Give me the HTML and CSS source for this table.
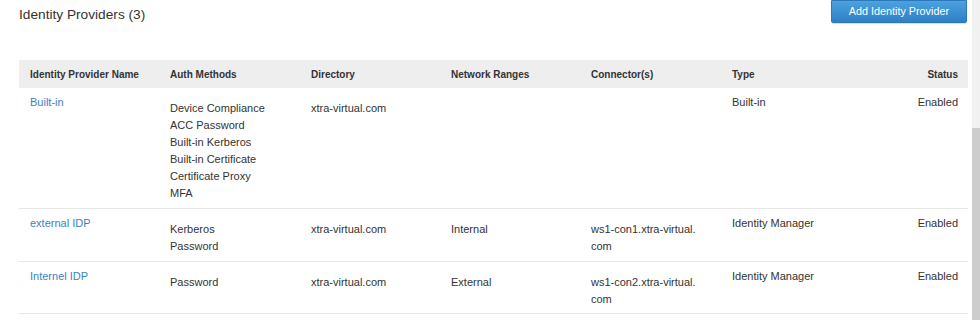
FILE: index.html
```html
<!DOCTYPE html>
<html>
<head>
<meta charset="utf-8">
<link rel="stylesheet" href="styles.css">
</head>
<body>
<div class="page">
  <main class="content">
    <div class="topbar">
      <h1 class="title">Identity Providers (3)</h1>
      <button class="btn-primary">Add Identity Provider</button>
    </div>
    <table class="grid">
      <colgroup>
        <col class="c-name"><col class="c-auth"><col class="c-dir"><col class="c-net"><col class="c-conn"><col class="c-type"><col class="c-status">
      </colgroup>
      <thead>
        <tr>
          <th>Identity Provider Name</th>
          <th>Auth Methods</th>
          <th>Directory</th>
          <th>Network Ranges</th>
          <th>Connector(s)</th>
          <th>Type</th>
          <th class="right">Status</th>
        </tr>
      </thead>
      <tbody>
        <tr>
          <td><a class="link" href="#">Built-in</a></td>
          <td class="low">Device Compliance<br>ACC Password<br>Built-in Kerberos<br>Built-in Certificate<br>Certificate Proxy<br>MFA</td>
          <td class="low">xtra-virtual.com</td>
          <td class="low"></td>
          <td class="low"></td>
          <td>Built-in</td>
          <td class="right">Enabled</td>
        </tr>
        <tr>
          <td><a class="link" href="#">external IDP</a></td>
          <td class="low">Kerberos<br>Password</td>
          <td class="low">xtra-virtual.com</td>
          <td class="low">Internal</td>
          <td class="low">ws1-con1.xtra-virtual.<wbr>com</td>
          <td>Identity Manager</td>
          <td class="right">Enabled</td>
        </tr>
        <tr class="last">
          <td><a class="link" href="#">Internel IDP</a></td>
          <td class="low">Password</td>
          <td class="low">xtra-virtual.com</td>
          <td class="low">External</td>
          <td class="low">ws1-con2.xtra-virtual.<wbr>com</td>
          <td>Identity Manager</td>
          <td class="right">Enabled</td>
        </tr>
      </tbody>
    </table>
  </main>
  <div class="scrollbar"><div class="thumb"></div></div>
</div>
</body>
</html>
```
FILE: styles.css
```css
html, body {
  margin: 0;
  padding: 0;
  background: #ffffff;
}
body {
  font-family: "Liberation Sans", Arial, sans-serif;
  color: #333333;
  font-size: 11px;
}
.page {
  display: flex;
  width: 980px;
  height: 320px;
  overflow: hidden;
}
.content {
  flex: 1;
  padding: 0 4px 0 19px;
  min-width: 0;
}
.topbar {
  display: flex;
  justify-content: space-between;
  align-items: flex-start;
  height: 23px;
}
.title {
  margin: 7px 0 0 0;
  font-size: 13.7px;
  font-weight: normal;
  line-height: normal;
  color: #333333;
}
.btn-primary {
  height: 23px;
  margin: 0 1px 0 0;
  padding: 0 17px;
  border: 1px solid #2c78bb;
  border-radius: 0 0 2px 2px;
  background: linear-gradient(#4ba2de, #2e80c6);
  color: #ffffff;
  font-family: "Liberation Sans", Arial, sans-serif;
  font-size: 10.8px;
  line-height: 21px;
  box-shadow: 0 1px 1px rgba(0,0,0,0.15);
}
.grid {
  margin-top: 37px;
  width: 949px;
  border-collapse: collapse;
  table-layout: fixed;
}
.c-name { width: 140px; }
.c-auth { width: 141px; }
.c-dir { width: 140px; }
.c-net { width: 140px; }
.c-conn { width: 141px; }
.c-type { width: 140px; }
.grid th {
  background: #eeeeee;
  font-weight: bold;
  font-size: 10px;
  text-align: left;
  white-space: nowrap;
  line-height: 17px;
  padding: 6px 10px 5px 11px;
  color: #333333;
}
.grid td {
  vertical-align: top;
  line-height: 17px;
  padding: 6px 10px 6px 11px;
  border-bottom: 1px solid #e6e6e6;
}
.grid td.low {
  padding-top: 12px;
}
.grid tr.last td {
  padding-bottom: 5px;
}
.grid .right {
  text-align: right;
}
.link {
  color: #3b82c4;
  text-decoration: none;
}
.scrollbar {
  width: 8px;
  flex: none;
  background: #f1f1f1;
  display: flex;
  flex-direction: column;
  padding-top: 128px;
  box-sizing: border-box;
}
.thumb {
  flex: 1;
  background: #cdcdcd;
}
```
